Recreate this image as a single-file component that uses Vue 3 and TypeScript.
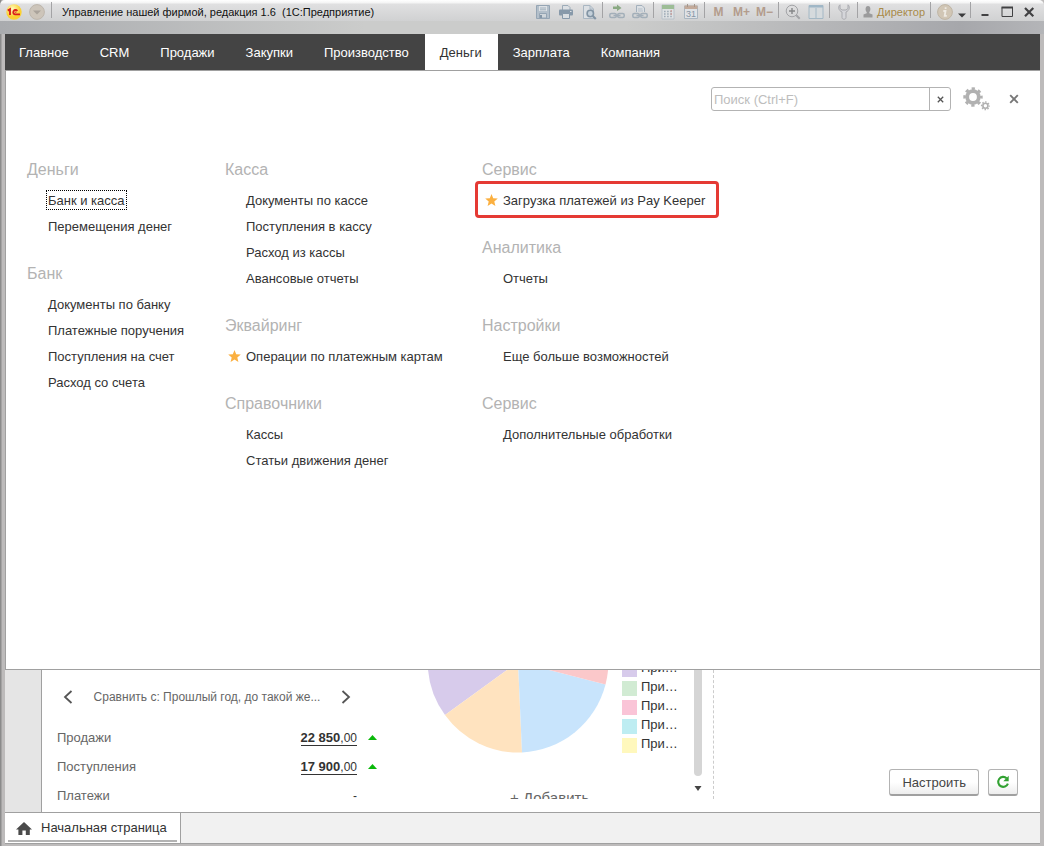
<script setup lang="ts">
import { ref } from 'vue'

interface MenuItem { text: string; star?: boolean; marked?: boolean; focused?: boolean }
interface MenuGroup { title: string; items: MenuItem[] }

const sections: string[] = ['Главное', 'CRM', 'Продажи', 'Закупки', 'Производство', 'Деньги', 'Зарплата', 'Компания']
const active = ref('Деньги')
const query = ref('')

const columns: MenuGroup[][] = [
  [
    { title: 'Деньги', items: [{ text: 'Банк и касса', focused: true }, { text: 'Перемещения денег' }] },
    {
      title: 'Банк',
      items: [{ text: 'Документы по банку' }, { text: 'Платежные поручения' }, { text: 'Поступления на счет' }, { text: 'Расход со счета' }],
    },
  ],
  [
    {
      title: 'Касса',
      items: [{ text: 'Документы по кассе' }, { text: 'Поступления в кассу' }, { text: 'Расход из кассы' }, { text: 'Авансовые отчеты' }],
    },
    { title: 'Эквайринг', items: [{ text: 'Операции по платежным картам', star: true }] },
    { title: 'Справочники', items: [{ text: 'Кассы' }, { text: 'Статьи движения денег' }] },
  ],
  [
    { title: 'Сервис', items: [{ text: 'Загрузка платежей из Pay Keeper', star: true, marked: true }] },
    { title: 'Аналитика', items: [{ text: 'Отчеты' }] },
    { title: 'Настройки', items: [{ text: 'Еще больше возможностей' }] },
    { title: 'Сервис', items: [{ text: 'Дополнительные обработки' }] },
  ],
]

const legend: string[] = ['violet', 'green', 'pink', 'cyan', 'yellow']
</script>

<template>
  <div class="window">
    <header class="titlebar">
      <button class="logo" aria-label="1С">
        <svg width="16" height="16" viewBox="0 0 16 16">
          <defs>
            <radialGradient id="sun" cx="40%" cy="30%"><stop offset="0" stop-color="#fffbc0" /><stop offset="1" stop-color="#fbd030" /></radialGradient>
          </defs>
          <circle cx="8" cy="8" r="7.7" fill="url(#sun)" />
          <path d="M1.8 6.6 4 5.2V11M11.3 7A2.2 2.2 0 1 0 9 10.4H14" fill="none" stroke="#d8201c" stroke-width="1.9" />
          <path d="M9 8.2H10.4" stroke="#d8201c" />
        </svg>
      </button>
      <button class="logo" aria-label="Главное меню">
        <svg width="16" height="16" viewBox="0 0 16 16">
          <circle cx="8" cy="8" r="7.4" fill="#cdc5ba" stroke="#bdb6ac" />
          <path d="M4 6.5H12L8 10.5Z" fill="#aaa39b" />
        </svg>
      </button>
      <i class="sep"></i>
      <h1>Управление нашей фирмой, редакция 1.6 &nbsp;(1С:Предприятие)</h1>

      <div class="tools">
        <button aria-label="Сохранить">
          <svg width="16" height="16" viewBox="0 0 16 16"><path d="M1.5 1.5H14.5V14.5H1.5Z" fill="#b3bfca" stroke="#95a5b4" /><path d="M4 2H12V7H4Z" fill="#dde1e5" /><path d="M5 4H11M5 5.8H11" stroke="#a0afbc" /><path d="M4.5 9.5H11.5V14H4.5Z" fill="#d0d6db" stroke="#95a5b4" /><path d="M6 11V14" stroke="#8496a7" stroke-width="2" /></svg>
        </button>
        <button aria-label="Печать">
          <svg width="16" height="16" viewBox="0 0 16 16"><path d="M4.5 6V1.5H10L12 3.5V6" fill="#dce0e4" stroke="#9cabb8" /><rect x="1" y="5.5" width="14" height="6" rx="1" fill="#8799aa" /><path d="M4.5 9.5H11.5V14.5H4.5Z" fill="#d9dee2" stroke="#8799aa" /><path d="M12 7.5H13.5" stroke="#dce0e4" /></svg>
        </button>
        <button aria-label="Просмотр">
          <svg width="16" height="16" viewBox="0 0 16 16"><path d="M2.5 1.5H9L12.5 5V14.5H2.5Z" fill="#dce0e4" stroke="#a9b6c2" /><path d="M9 1.5V5H12" fill="none" stroke="#a9b6c2" /><circle cx="9.3" cy="9.5" r="3.2" fill="#c4d0da" stroke="#8294a4" stroke-width="1.6" /><path d="M11.8 12 14.8 15" stroke="#8294a4" stroke-width="2.2" /></svg>
        </button>
        <i class="sep"></i>
        <button aria-label="Перейти по ссылке">
          <svg width="16" height="16" viewBox="0 0 16 16"><path d="M4 2.5H8V.5L12.5 4 8 7V5H4Z" fill="#89a982" /><g fill="none" stroke="#a3afb9" stroke-width="1.5"><rect x=".8" y="9.5" width="6.5" height="4" rx="1.5" /><rect x="8.7" y="9.5" width="6.5" height="4" rx="1.5" /><path d="M4.5 11.5H11.5" /></g></svg>
        </button>
        <button aria-label="Получить ссылку">
          <svg width="16" height="16" viewBox="0 0 16 16"><path d="M4.5 8V1.5H10L12.5 4V8" fill="#dce0e4" stroke="#a3b0bc" /><path d="M6 5H10.5M6 7H11" stroke="#b3bdc7" /><g fill="none" stroke="#a3afb9" stroke-width="1.5"><rect x=".8" y="9.5" width="6.5" height="4" rx="1.5" /><rect x="8.7" y="9.5" width="6.5" height="4" rx="1.5" /><path d="M4.5 11.5H11.5" /></g></svg>
        </button>
        <i class="sep"></i>
        <button aria-label="Калькулятор">
          <svg width="16" height="16" viewBox="0 0 16 16"><path d="M2 1H14V15H2Z" fill="#dfe2e4" stroke="#b8c1c9" /><path d="M2 1H14V5H2Z" fill="#9dbd96" /><path d="M4 7.5H12M4 10H12M4 12.5H12" stroke="#9eabb6" stroke-width="1.4" stroke-dasharray="1.6 1.5" /><path d="M10.5 7H12M10.5 10H12" stroke="#cc9c98" stroke-width="1.4" /></svg>
        </button>
        <button aria-label="Календарь">
          <svg class="calendar" width="16" height="16" viewBox="0 0 16 16"><path d="M1.5 2H14.5V14.5H1.5Z" fill="#dfe2e6" stroke="#aab6c1" /><path d="M1.5 1.5H14.5V5H1.5Z" fill="#c3aa9a" /><path d="M4.5 0V3M11.5 0V3" stroke="#a4968c" /><text x="8" y="13" text-anchor="middle">31</text></svg>
        </button>
        <i class="sep"></i>
        <button class="memory">M</button>
        <button class="memory">M+</button>
        <button class="memory">M&minus;</button>
        <i class="sep"></i>
        <button aria-label="Масштаб">
          <svg width="16" height="16" viewBox="0 0 16 16" fill="none" stroke="#a3a4a7"><circle cx="7" cy="7" r="5.8" /><path d="M7 4V10M4 7H10" stroke="#858688" stroke-width="1.4" /><path d="M11.3 11.3 14.7 14.7" stroke-width="2" /></svg>
        </button>
        <button aria-label="Окна">
          <svg width="16" height="16" viewBox="0 0 16 16"><path d="M1 1.5H15V14.5H1Z" fill="#d5dadd" stroke="#a4b8c5" /><path d="M1 2.5H15" stroke="#9fb7c7" stroke-width="2" /><path d="M8 4V14" stroke="#a4b8c5" /></svg>
        </button>
        <i class="sep"></i>
        <button aria-label="Сервис">
          <svg width="16" height="16" viewBox="0 0 16 16"><path d="M4 .8V4.5L6 6H10L12 4.5V.8C14.4 2.8 13.4 6.7 10 8V13.5C10 15.8 6 15.8 6 13.5V8C2.6 6.7 1.6 2.8 4 .8Z" fill="#d5d6da" stroke="#a9aaaf" /></svg>
        </button>
        <i class="sep"></i>
        <button class="user">
          <svg width="10" height="12" viewBox="0 0 10 12"><path d="M5 0C8.3 0 7.7 5 6.3 6V7.2L9.5 8.5V11.5H.5V8.5L3.7 7.2V6C2.3 5 1.7 0 5 0Z" fill="#9b9b9c" /></svg>
          Директор
        </button>
        <i class="sep"></i>
        <button aria-label="Справка">
          <svg width="16" height="16" viewBox="0 0 16 16"><circle cx="8" cy="8" r="7.4" fill="#d1c6b5" stroke="#bfb5a5" /><path d="M8.6 3.2V5M6.3 7H8.5L7.7 11.8H9.8" fill="none" stroke="#eeeae3" stroke-width="1.8" /></svg>
        </button>
        <button class="more" aria-label="Еще">
          <svg width="10" height="16" viewBox="0 0 10 16"><path d="M1 9.5H9L5 13.5Z" fill="#3b3b3d" /></svg>
        </button>
        <i class="sep"></i>
      </div>
      <div class="controls">
        <button aria-label="Свернуть"><svg width="12" height="12" viewBox="0 0 12 12"><path d="M2.5 9H9.5" stroke="#414143" stroke-width="2" /></svg></button>
        <button aria-label="Развернуть"><svg width="12" height="12" viewBox="0 0 12 12"><path d="M1 1.5H11.5V10.5H1Z" fill="none" stroke="#414143" /><path d="M.5 1.5H12" stroke="#414143" stroke-width="2" /></svg></button>
        <button aria-label="Закрыть"><svg width="12" height="12" viewBox="0 0 12 12"><path d="M2 2 10.3 10.3M10.3 2 2 10.3" stroke="#414143" stroke-width="2.2" /></svg></button>
      </div>
    </header>

    <div class="body">
      <nav class="sections">
        <button v-for="s in sections" :key="s" :class="{ active: s === active }" @click="active = s">{{ s }}</button>
      </nav>

      <main class="menu">
        <div class="searchrow">
          <div class="search">
            <input v-model="query" type="text" aria-label="Поиск" placeholder="Поиск (Ctrl+F)" />
            <button aria-label="Очистить" @click="query = ''"><svg width="7" height="7" viewBox="0 0 7 7"><path d="M.8.8 6.2 6.2M6.2.8.8 6.2" stroke="#555" stroke-width="1.3" /></svg></button>
          </div>
          <button class="gears" aria-label="Настройки">
            <svg width="28" height="24" viewBox="0 0 28 24" fill="none" stroke="#b1b1b1">
              <circle cx="10" cy="10" r="5.8" stroke-width="3.8" />
              <circle cx="10" cy="10" r="8.4" stroke-width="2.6" stroke-dasharray="3.3 3.3" stroke-dashoffset="1.65" />
              <circle cx="22.4" cy="18.8" r="2.5" stroke-width="1.6" />
              <circle cx="22.4" cy="18.8" r="3.8" stroke-width="1.4" stroke-dasharray="1.5 1.48" stroke-dashoffset=".75" />
            </svg>
          </button>
          <button class="close" aria-label="Закрыть меню"><svg width="10" height="10" viewBox="0 0 10 10"><path d="M1.2 1.2 8.8 8.8M8.8 1.2 1.2 8.8" stroke="#777" stroke-width="1.9" /></svg></button>
        </div>

        <div class="columns">
          <div v-for="(col, c) in columns" :key="c" class="column">
            <section v-for="(g, i) in col" :key="i">
              <h2>{{ g.title }}</h2>
              <ul>
                <li v-for="item in g.items" :key="item.text" :class="{ marked: item.marked }">
                  <svg v-if="item.star" class="star" width="13" height="12" viewBox="0 0 13 12"><path d="M6.5 0 8.2 4.2 12.8 4.5 9.3 7.4 10.4 11.9 6.5 9.4 2.6 11.9 3.7 7.4.2 4.5 4.8 4.2Z" fill="#fbb040" /></svg>
                  <a href="#" :class="{ focused: item.focused }">{{ item.text }}</a>
                </li>
              </ul>
            </section>
          </div>
        </div>
      </main>

      <div class="desktop">
        <div class="gutter"></div>
        <div class="page">
          <section class="totals">
            <div class="compare">
              <button aria-label="Назад"><svg width="10" height="14" viewBox="0 0 10 14"><path d="M8.5 1 2 7 8.5 13" fill="none" stroke="#555" stroke-width="1.8" /></svg></button>
              <span>Сравнить с: Прошлый год, до такой же...</span>
              <button aria-label="Вперед"><svg width="10" height="14" viewBox="0 0 10 14"><path d="M1.5 1 8 7 1.5 13" fill="none" stroke="#555" stroke-width="1.8" /></svg></button>
            </div>
            <table>
              <tbody>
                <tr><th scope="row">Продажи</th><td><a href="#"><b>22 850</b>,00</a></td><td class="trend"><svg width="9" height="5" viewBox="0 0 9 5"><path d="M0 5 4.5 0 9 5Z" fill="#0ab80a" /></svg></td></tr>
                <tr><th scope="row">Поступления</th><td><a href="#"><b>17 900</b>,00</a></td><td class="trend"><svg width="9" height="5" viewBox="0 0 9 5"><path d="M0 5 4.5 0 9 5Z" fill="#0ab80a" /></svg></td></tr>
                <tr><th scope="row">Платежи</th><td>-</td><td class="trend"></td></tr>
              </tbody>
            </table>
          </section>

          <section class="chart">
            <div class="plot">
              <svg width="182" height="84" viewBox="0 0 182 84">
                <path d="M91-8 18 45A90.3 90.3 0 0 1 .7-8Z" fill="#d7cbeb" />
                <path d="M91-8 18 45A90.3 90.3 0 0 0 95 82.4Z" fill="#ffe3bf" />
                <path d="M91-8 95 82.4A90.5 90.5 0 0 0 178.5 14.5Z" fill="#c8e4fc" />
                <path d="M91-8 178.5 14.5A90.5 90.5 0 0 0 181.5-8Z" fill="#fbc8ca" />
              </svg>
              <ul>
                <li v-for="l in legend" :key="l"><i :class="l"></i>При…</li>
              </ul>
            </div>
            <button class="add">+ Добавить</button>
          </section>

          <div class="scroll">
            <i class="thumb"></i>
            <svg width="8" height="5" viewBox="0 0 8 5"><path d="M.5 0H7.5L4 5Z" fill="#444" /></svg>
          </div>

          <div class="actions">
            <button>Настроить</button>
            <button class="refresh" aria-label="Обновить">
              <svg width="14" height="14" viewBox="0 0 14 14"><path d="M10.6 3.2A5 5 0 1 0 11.9 8.6" fill="none" stroke="#32a232" stroke-width="2.1" /><path d="M12.7.8V6.2H7.3Z" fill="#32a232" /></svg>
            </button>
          </div>
        </div>
      </div>

      <footer class="tabs">
        <button class="tab">
          <span>
            <svg width="16" height="13" viewBox="0 0 16 13"><path d="M8 0 16 7.4H13.8V13H9.8V8.5H6.4V13H2.4V7.4H0Z" fill="#4a4a4a" /></svg>
            Начальная страница
          </span>
        </button>
      </footer>
    </div>
  </div>
</template>

<style>
body { margin: 0; }
</style>

<style scoped>
* { box-sizing: border-box; }
.window {
  display: flex;
  flex-direction: column;
  min-height: 100vh;
  padding: 0 4px 2px 5px;
  background: linear-gradient(90deg, #8b8b8b 0, #8b8b8b 1px, #bdbbbb 2px, #bdbbbb 100%);
  font: 13px/16px "Liberation Sans", Arial, sans-serif;
  color: #333;
}
button { margin: 0; padding: 0; border: 0; background: none; font: inherit; color: inherit; }
svg { display: block; flex: none; }
ul { list-style: none; margin: 0; padding: 0; }
h1, h2 { margin: 0; font-weight: normal; }
a { color: inherit; text-decoration: none; }

.titlebar {
  display: flex;
  align-items: flex-start;
  height: 34px;
  margin: 0 -4px 0 -5px;
  padding: 4px 9px 0 6px;
  border-radius: 5px 5px 0 0;
  background:
    linear-gradient(#fff 0, #f4f4f4 3px, #e0e0e1 4px, #d0d1d2 21px, transparent 21px),
    linear-gradient(90deg, #a9abae 0, #cbcccb 35%, #cbcccb 60%, #a6a7ab 92%, #b4b5b8 100%);
}
.logo { margin-right: 7px; }
.titlebar > .sep { margin-left: -1px; }
.titlebar h1 { flex: 1; margin-left: 8px; font-size: 11px; line-height: 17px; color: #111; white-space: nowrap; }
.sep { width: 1px; height: 16px; margin: -2px 2px 0; background: #a3a3a5; flex: none; }
.tools, .controls { display: flex; }
.tools button { display: flex; justify-content: center; width: 23px; }
.tools .memory { font-weight: bold; font-size: 12px; color: #b39c8c; }
.calendar text { font: 9px "Liberation Sans", Arial, sans-serif; fill: #8796a5; }
.tools .user { width: auto; gap: 4px; padding: 0 3px; align-items: center; font-size: 11px; color: #a88a48; }
.tools .more { width: 12px; }
.controls { gap: 10px; padding-left: 6px; }
.controls button { padding-top: 2px; }

.body { flex: 1; display: flex; flex-direction: column; background: #fff; border-bottom: 1px solid #a0a0a0; }
.sections { display: flex; background: #444; border-bottom: 1px solid #a0a0a0; color: #fff; }
.sections button { padding: 11px 16px 9px 15px; }
.sections button:first-child { padding-left: 14px; }
.sections .active { background: #fff; color: #333; }

.menu { flex: 1; border-left: 1px solid #a0a0a0; border-bottom: 1px solid #a0a0a0; }
.searchrow { display: flex; justify-content: flex-end; align-items: center; padding: 16px 21px 0 0; }
.search { display: flex; width: 240px; height: 24px; border: 1px solid #b3b3b3; border-radius: 3px; }
.search input { flex: 1; min-width: 0; padding: 2px 2px 0; border: 0; outline: 0; background: none; font: inherit; color: #333; }
.search input::placeholder { color: #bdbdbd; opacity: 1; }
.search button { display: grid; place-items: center; width: 21px; border-left: 1px solid #b3b3b3; }
.gears { margin: 0 18px 0 12px; }
.columns { display: grid; grid-template-columns: 198px 257px 1fr; padding: 45px 0 24px 21px; }
.column { display: flex; flex-direction: column; gap: 21px; }
h2 { margin-bottom: 3px; font-size: 16px; line-height: 28px; color: #b3b3b3; }
.column section { height: max-content; margin-bottom: 0; }
.menu li { display: flex; align-items: center; width: max-content; height: 26px; padding-left: 20px; }
.menu a { padding: 2px 1px 0; }
.star { margin: 0 4px 0 -17px; }
.focused { outline: 1px dotted #000; }
.marked { position: relative; }
.marked::after { content: ""; position: absolute; inset: -6px -13px -5px -7px; border: 3px solid #e53a34; border-radius: 4px; }

.desktop { display: flex; border-bottom: 1px solid #a0a0a0; }
.gutter { width: 37px; background: #e5e5e5; border-right: 1px solid #a0a0a0; }
.page { flex: 1; display: flex; height: 142px; padding: 0 22px 13px 15px; color: #666; }
.totals { width: 320px; padding-top: 18px; }
.compare { display: flex; justify-content: space-between; height: 18px; padding: 0 26px 0 6px; align-items: center; font-size: 12px; }
table { width: 100%; margin-top: 17px; border-collapse: collapse; }
th, td { height: 29px; padding: 0; font-weight: normal; text-align: left; }
td { text-align: right; color: #333; font-size: 12px; }
td a { border-bottom: 1px solid #333; }
td b { font-size: 13px; }
.trend { width: 20px; }
.trend svg { margin-left: auto; }
.chart { width: 255px; margin-left: 50px; overflow: hidden; }
.plot { display: flex; gap: 13px; height: 119px; }
.plot ul { margin-top: -10px; font-size: 13px; color: #333; }
.plot li { display: flex; gap: 4px; height: 19px; }
.plot i { width: 15px; height: 15px; margin-top: 2px; }
.violet { background: #d7cbeb; }
.green { background: #d1ebd3; }
.pink { background: #fac4d7; }
.cyan { background: #beedf2; }
.yellow { background: #fff8bd; }
.add { display: block; margin-left: 83px; font-size: 15px; line-height: 18px; }
.scroll { display: flex; flex-direction: column; align-items: center; width: 32px; border-right: 1px dashed #ccc; gap: 10px; }
.thumb { width: 8px; height: 106px; border-radius: 0 0 4px 4px; background: #d5d5d5; }
.actions { flex: 1; display: flex; justify-content: flex-end; align-items: flex-end; gap: 9px; padding-bottom: 3px; }
.actions button { height: 27px; padding: 1px 12px 0; border: 1px solid #b3b3b3; border-bottom: 2px solid #a0a0a0; border-radius: 3px; background: linear-gradient(#fff 50%, #ededed); color: #444; }
.actions .refresh { width: 30px; padding: 0 7px; }

.tabs { display: flex; height: 30px; background: #f1f1f1; }
.tab { display: flex; padding: 0 3px; background: #fff; border-right: 1px solid #a0a0a0; }
.tab span { display: flex; align-items: center; gap: 9px; height: 29px; padding: 3px 10px 0 8px; border-bottom: 2px solid #b3b3b3; }
</style>
